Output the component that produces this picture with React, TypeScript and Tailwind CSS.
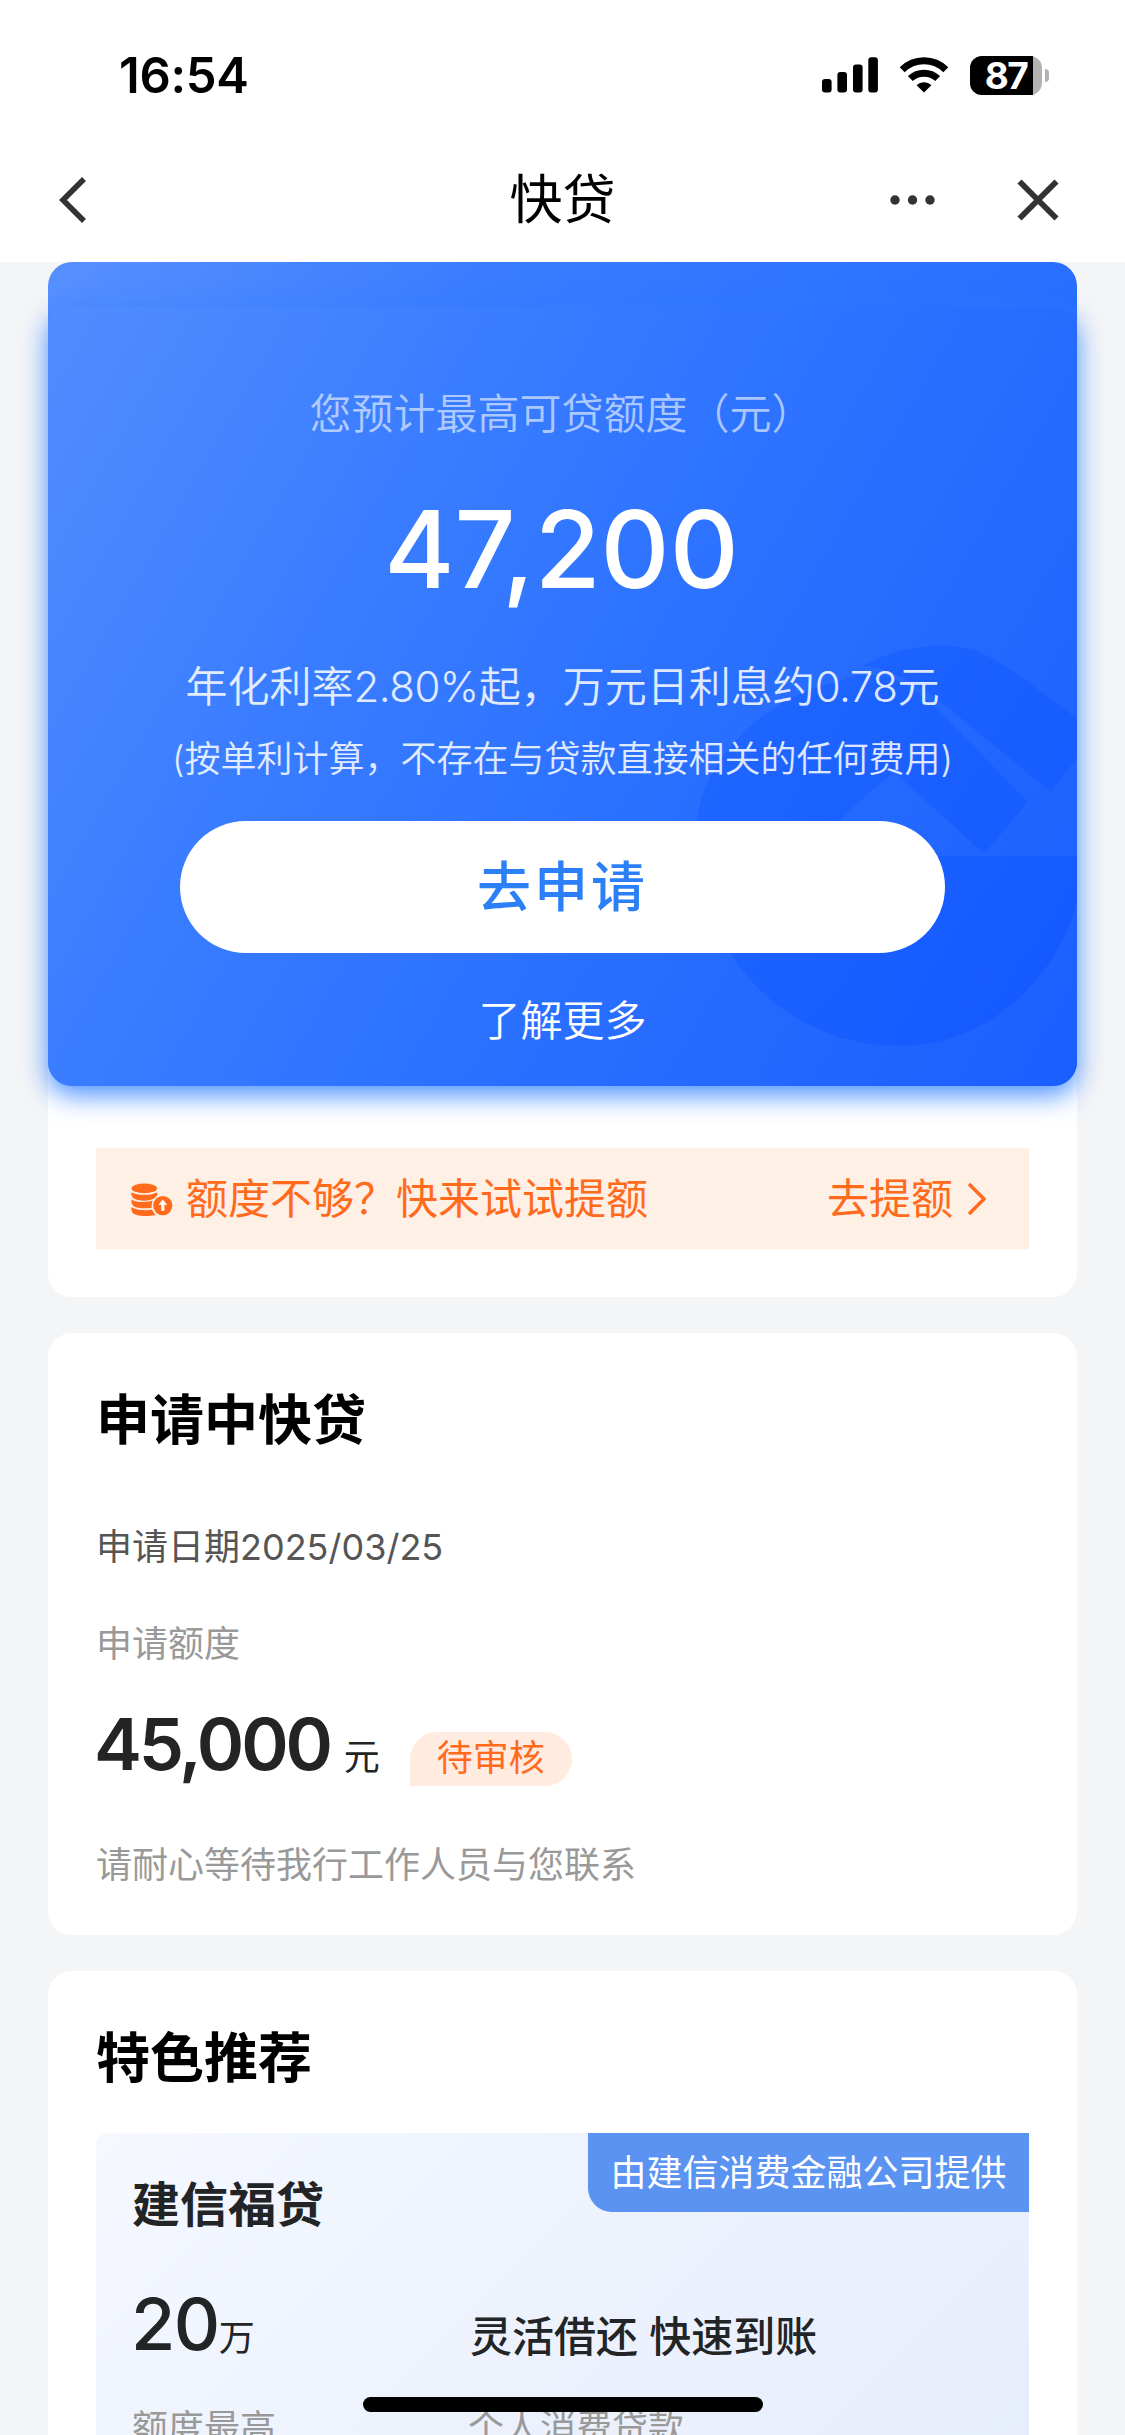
import { ReactNode } from "react";

function SignalIcon() {
  return (
    <svg width="56" height="36" viewBox="0 0 56 36" fill="#000">
      <rect x="0" y="22" width="9.6" height="13.5" rx="3" />
      <rect x="15.4" y="15" width="9.6" height="20.5" rx="3" />
      <rect x="31" y="7.5" width="9.6" height="28" rx="3" />
      <rect x="46.3" y="0.2" width="9.6" height="35.3" rx="3" />
    </svg>
  );
}

function WifiIcon() {
  return (
    <svg width="50" height="36" viewBox="0 0 50 36" fill="none" stroke="#000" strokeWidth="7">
      <path d="M3.2 12.8C15.2 0.8 34.8 0.8 46.8 12.8" />
      <path d="M11.3 21.6C18.9 14.3 31.1 14.3 38.7 21.6" />
      <path d="M25 35.5L17.6 28.2C21.8 24.3 28.2 24.3 32.4 28.2Z" fill="#000" stroke="none" />
    </svg>
  );
}

function Battery({ level }: { level: number }) {
  return (
    <div className="flex items-center gap-[3px]">
      <div className="relative flex h-[39px] w-[72px] items-center justify-center rounded-[12px] bg-[#b3b3b3]">
        <div className="absolute inset-y-0 left-0 rounded-l-[12px] bg-black" style={{ width: `${level}%` }} />
        <span className="relative text-[37px] leading-none font-bold tracking-[-1.5px] text-white">{level}</span>
      </div>
      <div className="h-[13px] w-[4px] rounded-r-full bg-[#b3b3b3]" />
    </div>
  );
}

function CoinsUpIcon() {
  return (
    <svg width="42" height="36" viewBox="0 0 42 36" fill="#ff6a1c">
      <ellipse cx="13.3" cy="7.4" rx="12.8" ry="4.8" />
      <path d="M0.6 11.2C5 14.6 21.6 14.6 26 11.2C27.6 15 25 17.4 20 18.8C15 20 9 19.9 5 18.6C1 17.3 -0.2 14.6 0.6 11.2Z" />
      <path d="M0.6 18.4C5 21.8 19 21.8 25 18.6L24 26C17 27.9 9 27.5 5 26.2C1 24.9 -0.2 21.8 0.6 18.4Z" />
      <path d="M0.6 26C5 29.4 16 29.8 21 28.4L24.5 34C18 35.6 9 35.2 5 33.8C1 32.5 -0.2 29.4 0.6 26Z" />
      <circle cx="31.8" cy="24.6" r="11.2" fill="#fff0e6" />
      <circle cx="31.8" cy="24.6" r="9.6" />
      <path d="M31.8 18.6L36.2 23.8H33.4V29.8H30.2V23.8H27.4Z" fill="#fff" />
    </svg>
  );
}

// bank emblem that sits behind the card content, cropped by the card's right edge
function Emblem() {
  return (
    <svg className="absolute inset-0" width="1029" height="780" viewBox="0 44 1029 780">
      <defs>
        <linearGradient id="emblem" x1="0" y1="0" x2="1" y2="1">
          <stop offset="0" stopColor="#0d55ff" stopOpacity="0.35" />
          <stop offset="1" stopColor="#0048ff" stopOpacity="0.3" />
        </linearGradient>
      </defs>
      <path
        fill="url(#emblem)"
        d="M814 404C850 384 890 380 918 386C950 392 1000 436 1029 456V496L1003 530L888 436C866 420 836 404 814 404ZM790 420C826 404 856 416 886 444L980 540L936 592L846 510C820 532 790 556 776 580C772 592 776 594 784 594H1029V640C1010 715 940 784 852 784C735 784 648 690 648 570C648 500 720 432 790 420Z"
      />
    </svg>
  );
}

function Card({ className = "", children }: { className?: string; children: ReactNode }) {
  return <section className={`mx-12 rounded-[24px] bg-white px-12 ${className}`}>{children}</section>;
}

export default function App() {
  return (
    <div className="relative flex h-[2435px] w-[1125px] flex-col overflow-hidden bg-[#f4f5f7] font-['Inter','Noto_Sans_CJK_SC',sans-serif] text-[#222426]">
      <header className="h-[262px] shrink-0 bg-white">
        <div className="flex h-[150px] items-center justify-between pr-[76px] pl-[119px]">
          <span className="text-[49px] leading-none font-semibold tracking-[-0.3px] text-black">16:54</span>
          <div className="flex items-center gap-[21px]">
            <SignalIcon />
            <WifiIcon />
            <Battery level={87} />
          </div>
        </div>
        <div className="grid h-[100px] grid-cols-3 items-center px-[58px]">
          <svg width="30" height="46" viewBox="0 0 30 46" fill="none" stroke="#333" strokeWidth="5.6">
            <path d="M26 2L5 23L26 44" />
          </svg>
          <h1 className="text-center text-[53px] leading-none text-black">快贷</h1>
          <div className="flex items-center justify-end gap-[81px] pr-[8px]">
            <svg width="46" height="10" viewBox="0 0 46 10" fill="#333">
              <circle cx="5" cy="5" r="4.7" />
              <circle cx="22.5" cy="5" r="4.7" />
              <circle cx="40" cy="5" r="4.7" />
            </svg>
            <svg width="42" height="42" viewBox="0 0 42 42" fill="none" stroke="#333" strokeWidth="5.8">
              <path d="M2.5 2.5L39.5 39.5M39.5 2.5L2.5 39.5" />
            </svg>
          </div>
        </div>
      </header>

      <section className="mx-12 h-[1035px] shrink-0 rounded-[24px] bg-white">
        <div className="h-[824px] rounded-[24px] bg-linear-[120deg,#5790ff_0%,#397cff_30%,#2c72ff_60%,#1f64ff_100%] pt-[44px]">
          <div className="rounded-[24px] shadow-[0_9px_27px_rgba(40,125,255,0.85)]">
            <div className="relative flex h-[780px] flex-col items-center overflow-hidden rounded-[24px] bg-linear-[120deg,#528dff_0%,#3a7dff_30%,#2a70ff_60%,#1b5eff_100%] text-white">
              <Emblem />
              <p className="relative mt-[78px] -ml-[2px] text-[42px] leading-[60px] font-[350] text-white/60">您预计最高可贷额度（元）</p>
              <p className="relative mt-[45px] -ml-[2px] text-[107px] leading-[120px] font-medium">47,200</p>
              <p className="relative mt-[48px] text-[42px] leading-[60px] font-[350] text-white/85">
                年化利率<span className="tracking-[-0.5px]">2.80%</span>起，万元日利息约
                <span className="tracking-[-0.5px]">0.78</span>元
              </p>
              <p className="relative mt-[17px] text-[36px] leading-[50px] font-[350] text-white/85">
                (按单利计算，不存在与贷款直接相关的任何费用)
              </p>
              <button className="relative mt-[37px] h-[132px] w-[765px] rounded-full bg-white text-[54px] font-medium tracking-[3px] text-[#2b80f7]">
                去申请
              </button>
              <a className="relative mt-[38px] text-[42px] leading-[60px] font-[350]">了解更多</a>
            </div>
          </div>
        </div>
        <div className="mx-12 mt-[62px] flex h-[101px] items-center bg-[#fff0e6] pr-[42px] pl-[35px] text-[42px] text-[#ff6a1c]">
          <CoinsUpIcon />
          <span className="ml-[13px] leading-none">额度不够？快来试试提额</span>
          <span className="ml-auto leading-none">去提额</span>
          <svg className="ml-[14px]" width="20" height="34" viewBox="0 0 20 34" fill="none" stroke="#ff6a1c" strokeWidth="3.4">
            <path d="M2 2L17 17L2 32" />
          </svg>
        </div>
      </section>

      <Card className="mt-9 h-[602px] shrink-0 pt-[48px]">
        <h2 className="text-[54px] leading-[80px] font-bold text-black">申请中快贷</h2>
        <p className="mt-[61px] text-[36px] leading-[50px] text-[#555]">申请日期2025/03/25</p>
        <p className="mt-[47px] text-[36px] leading-[50px] text-[#999]">申请额度</p>
        <div className="mt-[30px] flex items-end">
          <span className="-ml-[2px] text-[72px] leading-[90px] font-semibold tracking-[-3.2px]">45,000</span>
          <span className="mb-[7px] ml-[14px] text-[36px] leading-[50px]">元</span>
          <span className="mb-[3px] ml-[30px] flex h-[54px] items-center rounded-[27px] rounded-bl-none bg-[#ffebe0] px-[27px] pb-[2px] text-[36px] leading-none text-[#ff6a1c]">
            待审核
          </span>
        </div>
        <p className="mt-[51px] text-[36px] leading-[50px] text-[#999]">请耐心等待我行工作人员与您联系</p>
      </Card>

      <Card className="mt-9 h-[500px] shrink-0 pt-[48px]">
        <h2 className="text-[54px] leading-[80px] font-bold text-black">特色推荐</h2>
        <div className="relative mt-[34px] h-[400px] rounded-tl-[12px] bg-linear-[135deg,#f5f8ff_0%,#edf2fd_45%,#e6edfb_100%] px-9 pt-[40px]">
          <div className="absolute top-0 right-0 flex h-[79px] w-[441px] items-center justify-center rounded-bl-[24px] bg-[#5b93f2] text-[36px] leading-none text-white">
            由建信消费金融公司提供
          </div>
          <h3 className="text-[48px] leading-[64px] font-semibold">建信福贷</h3>
          <div className="mt-[42px] flex items-end">
            <div className="flex w-[338px] items-end">
              <span className="-ml-px text-[72px] leading-[90px] font-medium tracking-[-1.5px]">20</span>
              <span className="mb-[6px] text-[36px] leading-[50px]">万</span>
            </div>
            <span className="mb-[2px] text-[42px] leading-[60px] font-medium">灵活借还 快速到账</span>
          </div>
          <div className="mt-[34px] flex text-[36px] leading-[50px] text-[#999]">
            <span className="w-[336px]">额度最高</span>
            <span>个人消费贷款</span>
          </div>
        </div>
      </Card>

      <div className="absolute top-[2397px] left-[363px] h-[15px] w-[400px] rounded-full bg-black" />
    </div>
  );
}
